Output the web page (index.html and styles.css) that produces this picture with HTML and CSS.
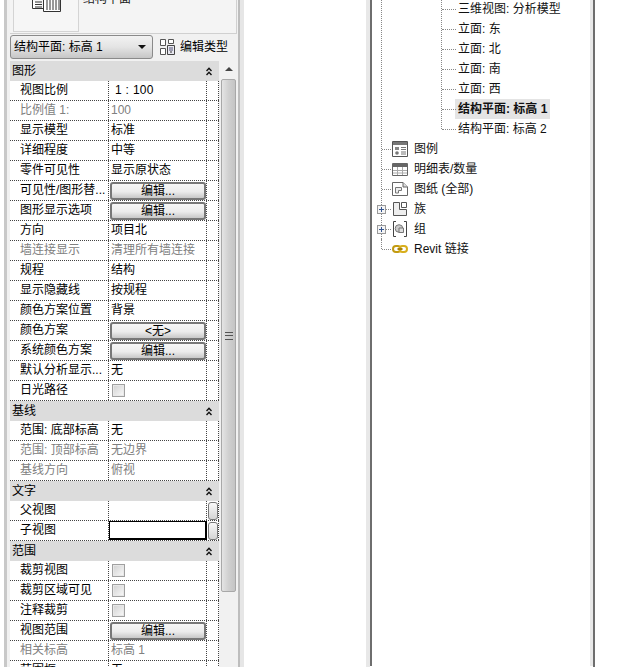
FILE: index.html
```html
<!DOCTYPE html>
<html lang="zh">
<head>
<meta charset="utf-8">
<title>属性</title>
<link rel="stylesheet" href="styles.css">
</head>
<body>
<main class="page">
  <section class="props">
    <div class="preview">
      <div class="thumb">
        <svg class="thumb-icon" width="29" height="12" viewBox="0 0 29 12"><path d="M.5 0V8.500H11.500M11.500 0V11.500H28.500V0" fill="#fff" stroke="#333"/><path d="M3 2H10M3 4.500H10M3 7H10M15 0V10M18 0V10M21 0V10M24 0V10M27 0V10" stroke="#333" fill="none"/></svg>
      </div>
      <span class="preview-name">结构平面</span>
    </div>
    <div class="selector">
      <div class="combo"><span>结构平面: 标高 1</span><i class="combo-arrow"></i></div>
      <div class="edit-type">
        <svg width="16" height="16" viewBox="0 0 16 16"><path d="M1.500.5H6.500V6.500H1.500ZM1.500 9.500H6.500V15.500H1.500ZM9.500.5H14.500V4.500H9.500Z" fill="#fff" stroke="#555"/><path d="M8.500 6.500H15.500V15.500H8.500Z" fill="#e8e8f0" stroke="#444"/><path d="M10 9H14M10 11H14" stroke="#557"/><path d="M11 13H13" stroke="#333"/></svg>
        <span>编辑类型</span>
      </div>
    </div>
    <div class="sheet">
      <div class="grid">
        <div class="group"><span>图形</span><svg class="fold" width="6" height="9" viewBox="0 0 6 9"><path d="M.5 4L3 1.200L5.500 4M.5 8L3 5.200L5.500 8" fill="none" stroke="#111" stroke-width="1.400"/></svg></div>
        <div class="row"><div class="name">视图比例</div><div class="val ratio">1 : 100</div><div class="extra"></div></div>
        <div class="row off"><div class="name">比例值 1:</div><div class="val">100</div><div class="extra"></div></div>
        <div class="row"><div class="name">显示模型</div><div class="val">标准</div><div class="extra"></div></div>
        <div class="row"><div class="name">详细程度</div><div class="val">中等</div><div class="extra"></div></div>
        <div class="row"><div class="name">零件可见性</div><div class="val">显示原状态</div><div class="extra"></div></div>
        <div class="row"><div class="name">可见性/图形替...</div><div class="val"><button class="btn">编辑...</button></div><div class="extra"></div></div>
        <div class="row"><div class="name">图形显示选项</div><div class="val"><button class="btn">编辑...</button></div><div class="extra"></div></div>
        <div class="row"><div class="name">方向</div><div class="val">项目北</div><div class="extra"></div></div>
        <div class="row off"><div class="name">墙连接显示</div><div class="val">清理所有墙连接</div><div class="extra"></div></div>
        <div class="row"><div class="name">规程</div><div class="val">结构</div><div class="extra"></div></div>
        <div class="row"><div class="name">显示隐藏线</div><div class="val">按规程</div><div class="extra"></div></div>
        <div class="row"><div class="name">颜色方案位置</div><div class="val">背景</div><div class="extra"></div></div>
        <div class="row"><div class="name">颜色方案</div><div class="val"><button class="btn">&lt;无&gt;</button></div><div class="extra"></div></div>
        <div class="row"><div class="name">系统颜色方案</div><div class="val"><button class="btn">编辑...</button></div><div class="extra"></div></div>
        <div class="row"><div class="name">默认分析显示...</div><div class="val">无</div><div class="extra"></div></div>
        <div class="row"><div class="name">日光路径</div><div class="val"><i class="check"></i></div><div class="extra"></div></div>
        <div class="group"><span>基线</span><svg class="fold" width="6" height="9" viewBox="0 0 6 9"><path d="M.5 4L3 1.200L5.500 4M.5 8L3 5.200L5.500 8" fill="none" stroke="#111" stroke-width="1.400"/></svg></div>
        <div class="row"><div class="name">范围: 底部标高</div><div class="val">无</div><div class="extra"></div></div>
        <div class="row off"><div class="name">范围: 顶部标高</div><div class="val">无边界</div><div class="extra"></div></div>
        <div class="row off"><div class="name">基线方向</div><div class="val">俯视</div><div class="extra"></div></div>
        <div class="group"><span>文字</span><svg class="fold" width="6" height="9" viewBox="0 0 6 9"><path d="M.5 4L3 1.200L5.500 4M.5 8L3 5.200L5.500 8" fill="none" stroke="#111" stroke-width="1.400"/></svg></div>
        <div class="row"><div class="name">父视图</div><div class="val"></div><div class="extra"><i class="mini"></i></div></div>
        <div class="row"><div class="name">子视图</div><div class="val val-active"></div><div class="extra"><i class="mini"></i></div></div>
        <div class="group"><span>范围</span><svg class="fold" width="6" height="9" viewBox="0 0 6 9"><path d="M.5 4L3 1.200L5.500 4M.5 8L3 5.200L5.500 8" fill="none" stroke="#111" stroke-width="1.400"/></svg></div>
        <div class="row"><div class="name">裁剪视图</div><div class="val"><i class="check"></i></div><div class="extra"></div></div>
        <div class="row"><div class="name">裁剪区域可见</div><div class="val"><i class="check"></i></div><div class="extra"></div></div>
        <div class="row"><div class="name">注释裁剪</div><div class="val"><i class="check"></i></div><div class="extra"></div></div>
        <div class="row"><div class="name">视图范围</div><div class="val"><button class="btn">编辑...</button></div><div class="extra"></div></div>
        <div class="row off"><div class="name">相关标高</div><div class="val">标高 1</div><div class="extra"></div></div>
        <div class="row"><div class="name">范围框</div><div class="val">无</div><div class="extra"></div></div>
      </div>
      <div class="scrollbar">
        <i class="scroll-up"></i>
        <div class="thumb-bar"><i class="grip"></i></div>
      </div>
    </div>
  </section>

  <section class="tree-frame">
    <div class="tree">
      <div class="trunk">
        <div class="twig">
          <div class="leaf">三维视图: 分析模型</div>
          <div class="leaf">立面: 东</div>
          <div class="leaf">立面: 北</div>
          <div class="leaf">立面: 南</div>
          <div class="leaf">立面: 西</div>
          <div class="leaf"><b class="current">结构平面: 标高 1</b></div>
          <div class="leaf leaf-last">结构平面: 标高 2</div>
        </div>
        <div class="node">
          <svg width="16" height="16" viewBox="0 0 16 16"><path d="M.5 .5H15.500V15.500H.5Z" fill="#fff" stroke="#555"/><path d="M1 1H15V4H1Z" fill="#777"/><path d="M3 6H7V9H3Z" fill="#888"/><circle cx="5" cy="12" r="1.800" fill="#777"/><path d="M9 6.500H14M9 8.500H14M9 11H14M9 13H14" stroke="#777"/></svg>
          <span>图例</span>
        </div>
        <div class="node">
          <svg width="16" height="16" viewBox="0 0 16 16"><path d="M.5 2.500H15.500V14.500H.5Z" fill="#fff" stroke="#666"/><path d="M1 3H15V6H1Z" fill="#666"/><path d="M1 9.500H15M1 12H15M5.500 6V14M10.500 6V14" stroke="#aaa"/></svg>
          <span>明细表/数量</span>
        </div>
        <div class="node">
          <svg width="16" height="16" viewBox="0 0 16 16"><path d="M.5 1.500H11L15.500 6V14.500H.5Z" fill="#fff" stroke="#666"/><path d="M11 1.500V6H15.500" fill="#ddd" stroke="#666"/><path d="M3.500 12V6.500H9.500V9.500H6.500V12Z" fill="#eee" stroke="#777"/></svg>
          <span>图纸 (全部)</span>
        </div>
        <div class="node">
          <i class="plus"></i>
          <svg width="16" height="16" viewBox="0 0 16 16"><path d="M1.500 1.500H7.500V8.500H14.500V14.500H1.500Z" fill="#eee" stroke="#555"/><path d="M9.500 1.500H14.500V6.500H9.500Z" fill="#fff" stroke="#555"/></svg>
          <span>族</span>
        </div>
        <div class="node">
          <i class="plus"></i>
          <svg width="16" height="16" viewBox="0 0 16 16"><path d="M4 .5H1.500V15.500H4M12 .5H14.500V15.500H12" fill="none" stroke="#444"/><circle cx="7" cy="7.500" r="3.800" fill="#ccc" stroke="#777"/><path d="M7 7H11.500V11.500H7Z" fill="#ddd" stroke="#777"/></svg>
          <span>组</span>
        </div>
      </div>
      <div class="node node-last">
        <svg width="16" height="16" viewBox="0 0 16 16"><rect x="1" y="5" width="7.500" height="6" rx="3" fill="none" stroke="#c29a10" stroke-width="2"/><rect x="7.500" y="5" width="7.500" height="6" rx="3" fill="none" stroke="#d8ae1c" stroke-width="2"/><path d="M5.500 8H10.500" stroke="#a8820c" stroke-width="2"/></svg>
        <span>Revit 链接</span>
      </div>
    </div>
  </section>
</main>
</body>
</html>
```

FILE: styles.css
```css
* { box-sizing: border-box; }
html, body { margin: 0; height: 100%; background: #fff; }
body { overflow: hidden; }
.page {
  display: flex;
  height: 667px;
  overflow: hidden;
  padding-left: 4px;
  font: 12px/20px "Liberation Sans", "Noto Sans CJK SC", sans-serif;
  color: #000;
}

/* properties palette */
.props {
  width: 240px;
  flex: none;
  height: 667px;
  background: #f1f1f1;
  border-left: 3px solid #c8c8c8;
  border-right: 4px solid #e6e6e6;
  padding-left: 3px;
  box-shadow: inset -2px 0 0 #bdbdbd;
}
.preview {
  height: 34px;
  width: 227px;
  display: flex;
  gap: 4px;
  overflow: hidden;
  border-right: 1px solid #d0d0d0;
  border-bottom: 1px solid #d0d0d0;
  padding-left: 3px;
  background: #f4f4f4;
}
.thumb {
  width: 66px;
  height: 32px;
  border: 1px solid #d4d4d4;
  border-top: 0;
  padding-left: 18px;
  background: #f6f6f6;
}
.thumb-icon { display: block; }
.preview-name { margin-top: -11px; color: #222; }
.selector {
  display: flex;
  align-items: center;
  height: 24px;
  margin: 1px 0 2px;
}
.combo {
  width: 143px;
  height: 24px;
  display: flex;
  align-items: center;
  justify-content: space-between;
  padding: 0 6px 0 3px;
  border: 1px solid #8a8a8a;
  border-radius: 3px;
  background: linear-gradient(#f2f2f2, #e4e4e4 50%, #c6c6c6);
}
.combo-arrow {
  width: 0;
  height: 0;
  border: 4px solid transparent;
  border-top: 4px solid #111;
  border-bottom: 0;
}
.edit-type {
  display: flex;
  align-items: center;
  gap: 5px;
  margin-left: 6px;
}
.sheet { display: flex; }
.grid { width: 209px; flex: none; }
.group {
  height: 20px;
  display: flex;
  align-items: center;
  justify-content: space-between;
  padding: 0 7px 0 2px;
  background: #dcdcdc;
}
.fold { display: block; }
.row {
  display: flex;
  height: 20px;
  background: #fff;
  border-bottom: 1px dotted #444;
  line-height: 18px;
}
.name {
  width: 99px;
  padding-left: 10px;
  border-right: 1px dotted #444;
  white-space: nowrap;
}
.val {
  width: 98px;
  padding-left: 2px;
  border-right: 1px dotted #444;
  white-space: nowrap;
}
.extra {
  width: 12px;
  border-right: 1px dotted #444;
}
.off .name, .off .val { color: #808080; }
.ratio { padding-left: 6px; letter-spacing: .3px; }
.val-active { border: 1px solid #000; border-width: 1px 2px 2px 1px; }
.mini {
  display: block;
  width: 10px;
  height: 18px;
  margin: 1px 0 0 1px;
  border: 1px solid #777;
  border-radius: 3px;
  background: linear-gradient(#fafafa, #d4d4d4);
}
.btn {
  display: block;
  width: 96px;
  height: 18px;
  margin: 1px 0 0 -1px;
  padding: 0;
  border: 2px solid #777;
  border-radius: 3px;
  background: linear-gradient(#f6f6f6, #ececec 55%, #c8c8c8);
  font: inherit;
  line-height: 14px;
  color: #000;
}
.check {
  display: block;
  width: 13px;
  height: 13px;
  margin: 3px 0 0 1px;
  border: 1px solid #a0a0a0;
  background: linear-gradient(135deg, #d0d0d0, #fafafa);
  box-shadow: inset 0 0 0 1px #e8e8e8;
}
.scrollbar {
  width: 17px;
  margin-left: 1px;
  display: flex;
  flex-direction: column;
  align-items: center;
}
.scroll-up {
  width: 0;
  height: 0;
  margin: 6px 0 6px;
  border: 4px solid transparent;
  border-top: 0;
  border-bottom: 4px solid #444;
}
.thumb-bar {
  width: 15px;
  height: 513px;
  margin-top: 2px;
  display: flex;
  align-items: center;
  justify-content: center;
  border: 1px solid #a8a8a8;
  border-radius: 2px;
  background: linear-gradient(90deg, #e4e4e4, #d0d0d0 50%, #c4c4c4);
}
.grip {
  width: 8px;
  height: 8px;
  border-top: 1px solid #555;
  border-bottom: 1px solid #555;
  background: linear-gradient(#555, #555) center / 100% 1px no-repeat;
}

/* project browser tree */
.tree-frame {
  margin-left: 122px;
  width: 229px;
  flex: none;
  height: 667px;
  border-left: 4px solid #e8e8e8;
  border-right: 2px solid #6e6e6e;
}
.tree {
  height: 100%;
  margin-top: -1px;
  padding-left: 9px;
  border-left: 2px solid #6e6e6e;
  border-right: 3px solid #e8e8e8;
  color: #111;
}
.trunk { border-left: 1px dotted #888; }
.twig {
  margin-left: 59px;
  border-left: 1px dotted #888;
  height: 130px;
  margin-bottom: 10px;
}
.leaf {
  position: relative;
  height: 20px;
  padding-left: 16px;
  white-space: nowrap;
}
.leaf::before, .node::before {
  content: "";
  position: absolute;
  left: 0;
  top: 10px;
  width: 14px;
  border-top: 1px dotted #888;
}
.leaf-last { height: 10px; }
.node-last::after {
  content: "";
  position: absolute;
  left: -1px;
  top: 0;
  height: 10px;
  border-left: 1px dotted #888;
}
.current {
  display: inline-block;
  height: 20px;
  margin-left: -3px;
  padding: 0 3px;
  background: #e4e4e4;
}
.node {
  position: relative;
  display: flex;
  align-items: center;
  gap: 6px;
  height: 20px;
  padding-left: 10px;
  white-space: nowrap;
}
.node::before { width: 9px; }
.node svg { flex: none; position: relative; }
.node-last { margin-left: 1px; }
.plus {
  position: absolute;
  left: -5px;
  top: 6px;
  width: 9px;
  height: 9px;
  border: 1px solid #999;
  background:
    linear-gradient(#35558f, #35558f) center / 5px 1px no-repeat,
    linear-gradient(#35558f, #35558f) center / 1px 5px no-repeat,
    #f4f4f4;
}
```
